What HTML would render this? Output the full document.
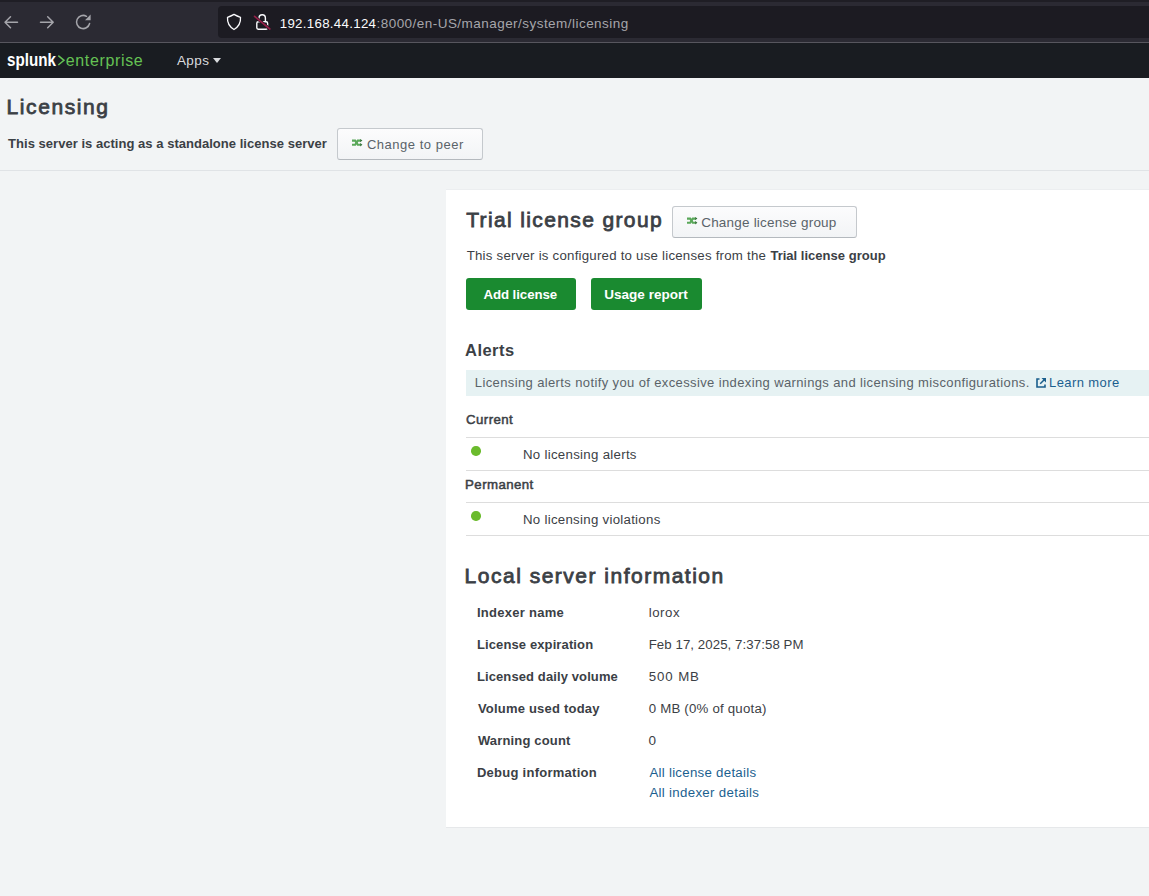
<!DOCTYPE html>
<html><head><meta charset="utf-8">
<style>
*{margin:0;padding:0;box-sizing:border-box}
html,body{width:1149px;height:896px;overflow:hidden;background:#f2f4f5;font-family:"Liberation Sans",sans-serif;color:#3c444d}
.t{position:absolute;white-space:nowrap;line-height:1}
.r{position:absolute}
.btn{position:absolute;border:1px solid #c5c9cd;border-bottom-color:#b4b9be;border-radius:3px;background:linear-gradient(#fcfcfd,#f2f4f6)}
.gbtn{position:absolute;background:#1a8a30;border-radius:3px}
.hline{position:absolute;left:466px;width:683px;height:1px;background:#dddddd}
.dot{position:absolute;width:9.5px;height:9.5px;border-radius:50%;background:#6bbb2d}
</style></head><body>
<div class="r" style="left:0;top:0;width:1149px;height:42px;background:#2b2a33"></div>
<div class="r" style="left:0;top:0;width:1149px;height:2px;background:#1f1e25"></div>
<div class="r" style="left:0;top:42px;width:1149px;height:1px;background:#57565e"></div>
<div class="r" style="left:218px;top:6px;width:960px;height:32px;background:#1c1b22;border-radius:4px"></div>
<svg class="r" style="left:0;top:0" width="120" height="42" viewBox="0 0 120 42">
 <g fill="none" stroke="#a5a5ab" stroke-width="1.5" stroke-linecap="round" stroke-linejoin="round">
  <path d="M17.5 22.2H5 M10.5 16.7L5 22.2L10.5 27.7"/>
  <path d="M40.5 22.2H53.2 M47.7 16.7L53.2 22.2L47.7 27.7"/>
  <path d="M89.6 23.5A6.6 6.6 0 1 1 86.5 16.3"/>
 </g>
 <path d="M85 20.2L90.6 14.6V20.2Z" fill="#a5a5ab"/>
</svg>
<svg class="r" style="left:218px;top:6px" width="60" height="32" viewBox="218 6 60 32">
 <path d="M234 14.4C236.4 15.8 238.6 16.7 240.5 17.3C240.9 22.8 238.2 27 234 29.5C229.8 27 227.1 22.8 227.5 17.3C229.4 16.7 231.6 15.8 234 14.4Z" fill="none" stroke="#fbfbfe" stroke-width="1.3" stroke-linejoin="round"/>
 <path d="M259 21.5V18A3.2 3.2 0 0 1 265.4 18V21.5" fill="none" stroke="#fbfbfe" stroke-width="1.4"/>
 <rect x="256.8" y="21.8" width="10.8" height="7.4" rx="1.4" fill="none" stroke="#fbfbfe" stroke-width="1.4"/>
 <path d="M254.6 16.4L269.8 29" stroke="#1c1b22" stroke-width="3"/>
 <path d="M254.6 16.4L269.8 29" stroke="#952049" stroke-width="1.7" stroke-linecap="round"/>
</svg>
<div class="r" style="left:0;top:43px;width:1149px;height:35px;background:#191c21"></div>
<svg class="r" style="left:55px;top:52px" width="12" height="16" viewBox="55 52 12 16">
 <path d="M58.3 55.6L64 60.3L58.3 65" fill="none" stroke="#65c254" stroke-width="1.5" stroke-linejoin="miter"/>
</svg>
<svg class="r" style="left:212px;top:57px" width="10" height="7" viewBox="0 0 10 7">
 <path d="M1 1H9L5 6Z" fill="#d9dbde"/>
</svg>
<!-- page -->
<div class="btn" style="left:337px;top:128px;width:146px;height:32px"></div>
<svg class="r" style="left:351px;top:138px" width="13" height="11" viewBox="0 0 13 11">
 <g fill="none" stroke="#5aa85a" stroke-width="2.1">
  <path d="M1 2.6H4.2L6.8 6.8H9.6"/><path d="M1 6.8H4.2L6.8 2.6H9.6"/>
 </g>
 <path d="M9.2 0.9L11.4 2.6L9.2 4.3Z M9.2 5.1L11.4 6.8L9.2 8.5Z" fill="#2e6f33"/>
</svg>
<div class="r" style="left:0;top:170px;width:1149px;height:1px;background:#e0e3e6"></div>
<div class="r" style="left:446px;top:190px;width:703px;height:637px;background:#fff;box-shadow:0 -1px 0 #eceef0,0 1px 0 #e6e8ea"></div>
<div class="btn" style="left:672px;top:206px;width:185px;height:32px"></div>
<svg class="r" style="left:686px;top:216px" width="13" height="11" viewBox="0 0 13 11">
 <g fill="none" stroke="#5aa85a" stroke-width="2.1">
  <path d="M1 2.6H4.2L6.8 6.8H9.6"/><path d="M1 6.8H4.2L6.8 2.6H9.6"/>
 </g>
 <path d="M9.2 0.9L11.4 2.6L9.2 4.3Z M9.2 5.1L11.4 6.8L9.2 8.5Z" fill="#2e6f33"/>
</svg>
<div class="gbtn" style="left:466px;top:278px;width:110px;height:32px"></div>
<div class="gbtn" style="left:591px;top:278px;width:111px;height:32px"></div>
<div class="r" style="left:466px;top:370px;width:683px;height:26px;background:#e6f2f3"></div>
<svg class="r" style="left:1035px;top:377px" width="12" height="12" viewBox="0 0 12 12">
 <path d="M4.5 2H2V10H10V7.5" fill="none" stroke="#1a5e8c" stroke-width="1.6"/>
 <path d="M5.2 6.8L9.5 2.5" stroke="#1a5e8c" stroke-width="1.5"/>
 <path d="M6.5 1H11V5.5Z" fill="#1a5e8c"/>
</svg>
<div class="hline" style="top:437px"></div>
<div class="dot" style="left:471.4px;top:446.3px"></div>
<div class="hline" style="top:470px"></div>
<div class="hline" style="top:502px"></div>
<div class="dot" style="left:471.4px;top:511.3px"></div>
<div class="hline" style="top:535px"></div>
<div class="t" style="left:279.7px;top:16.7px;font-size:13.25px;letter-spacing:0.32px;font-weight:400;color:#fbfbfe;">192.168.44.124</div>
<div class="t" style="left:376.5px;top:16.7px;font-size:13.5px;letter-spacing:0.46px;font-weight:400;color:#a6a6ab;">:8000/en-US/manager/system/licensing</div>
<div class="t" style="left:6.9px;top:51.9px;font-size:17.5px;letter-spacing:0.0px;font-weight:700;color:#ffffff;;transform-origin:0 0;transform:scaleX(0.8673)">splunk</div>
<div class="t" style="left:65.8px;top:52.9px;font-size:16.0px;letter-spacing:0.64px;font-weight:400;color:#65c254;">enterprise</div>
<div class="t" style="left:177.0px;top:54.0px;font-size:13.5px;letter-spacing:0.37px;font-weight:400;color:#d9dbde;">Apps</div>
<div class="t" style="left:6.5px;top:95.9px;font-size:21.0px;letter-spacing:1.6px;font-weight:400;color:#3b4045;-webkit-text-stroke:0.8px currentColor">Licensing</div>
<div class="t" style="left:8.1px;top:137.0px;font-size:13.0px;letter-spacing:0.03px;font-weight:700;color:#3b4045;">This server is acting as a standalone license server</div>
<div class="t" style="left:366.9px;top:137.6px;font-size:13.0px;letter-spacing:0.52px;font-weight:400;color:#5a6369;">Change to peer</div>
<div class="t" style="left:466.2px;top:209.0px;font-size:21.0px;letter-spacing:1.37px;font-weight:400;color:#3b4045;-webkit-text-stroke:0.8px currentColor">Trial license group</div>
<div class="t" style="left:701.2px;top:216.0px;font-size:13.5px;letter-spacing:0.2px;font-weight:400;color:#5a6369;">Change license group</div>
<div class="t" style="left:466.7px;top:249.0px;font-size:13.25px;letter-spacing:0.23px;font-weight:400;color:#3b4045;">This server is configured to use licenses from the</div>
<div class="t" style="left:770.4px;top:249.0px;font-size:13.0px;letter-spacing:0.02px;font-weight:700;color:#3b4045;">Trial license group</div>
<div class="t" style="left:483.4px;top:288.2px;font-size:13.25px;letter-spacing:-0.06px;font-weight:700;color:#ffffff;">Add license</div>
<div class="t" style="left:604.3px;top:288.2px;font-size:13.5px;letter-spacing:0.01px;font-weight:700;color:#ffffff;">Usage report</div>
<div class="t" style="left:465.0px;top:341.8px;font-size:16.5px;letter-spacing:0.48px;font-weight:700;color:#3b4045;">Alerts</div>
<div class="t" style="left:474.8px;top:375.7px;font-size:13.0px;letter-spacing:0.38px;font-weight:400;color:#5a6369;">Licensing alerts notify you of excessive indexing warnings and licensing misconfigurations.</div>
<div class="t" style="left:1049.1px;top:375.7px;font-size:13.0px;letter-spacing:0.4px;font-weight:400;color:#1b5f8f;">Learn more</div>
<div class="t" style="left:466.1px;top:412.8px;font-size:13.25px;letter-spacing:0.42px;font-weight:400;color:#3b4045;-webkit-text-stroke:0.5px currentColor">Current</div>
<div class="t" style="left:523.0px;top:448.0px;font-size:13.25px;letter-spacing:0.29px;font-weight:400;color:#3b4045;">No licensing alerts</div>
<div class="t" style="left:465.1px;top:478.1px;font-size:13.25px;letter-spacing:0.42px;font-weight:400;color:#3b4045;-webkit-text-stroke:0.5px currentColor">Permanent</div>
<div class="t" style="left:523.0px;top:513.2px;font-size:13.25px;letter-spacing:0.28px;font-weight:400;color:#3b4045;">No licensing violations</div>
<div class="t" style="left:464.6px;top:564.5px;font-size:21.0px;letter-spacing:1.5px;font-weight:400;color:#3b4045;-webkit-text-stroke:0.8px currentColor">Local server information</div>
<div class="t" style="left:476.9px;top:606.0px;font-size:13.0px;letter-spacing:0.28px;font-weight:700;color:#3b4045;">Indexer name</div>
<div class="t" style="left:476.9px;top:638.0px;font-size:13.0px;letter-spacing:0.12px;font-weight:700;color:#3b4045;">License expiration</div>
<div class="t" style="left:476.9px;top:669.8px;font-size:13.0px;letter-spacing:0.11px;font-weight:700;color:#3b4045;">Licensed daily volume</div>
<div class="t" style="left:477.9px;top:701.5px;font-size:13.0px;letter-spacing:0.21px;font-weight:700;color:#3b4045;">Volume used today</div>
<div class="t" style="left:477.9px;top:734.2px;font-size:13.0px;letter-spacing:0.16px;font-weight:700;color:#3b4045;">Warning count</div>
<div class="t" style="left:476.9px;top:766.0px;font-size:13.0px;letter-spacing:0.27px;font-weight:700;color:#3b4045;">Debug information</div>
<div class="t" style="left:648.7px;top:606.0px;font-size:13.25px;letter-spacing:0.55px;font-weight:400;color:#3b4045;">lorox</div>
<div class="t" style="left:648.7px;top:638.0px;font-size:13.25px;letter-spacing:0.07px;font-weight:400;color:#3b4045;">Feb 17, 2025, 7:37:58 PM</div>
<div class="t" style="left:648.7px;top:669.8px;font-size:13.25px;letter-spacing:0.92px;font-weight:400;color:#3b4045;">500 MB</div>
<div class="t" style="left:648.7px;top:701.5px;font-size:13.25px;letter-spacing:0.21px;font-weight:400;color:#3b4045;">0 MB (0% of quota)</div>
<div class="t" style="left:648.6px;top:734.2px;font-size:13.5px;letter-spacing:0.0px;font-weight:400;color:#3b4045;">0</div>
<div class="t" style="left:649.4px;top:766.0px;font-size:13.25px;letter-spacing:0.28px;font-weight:400;color:#1b5f8f;">All license details</div>
<div class="t" style="left:649.4px;top:786.3px;font-size:13.25px;letter-spacing:0.32px;font-weight:400;color:#1b5f8f;">All indexer details</div>
</body></html>
